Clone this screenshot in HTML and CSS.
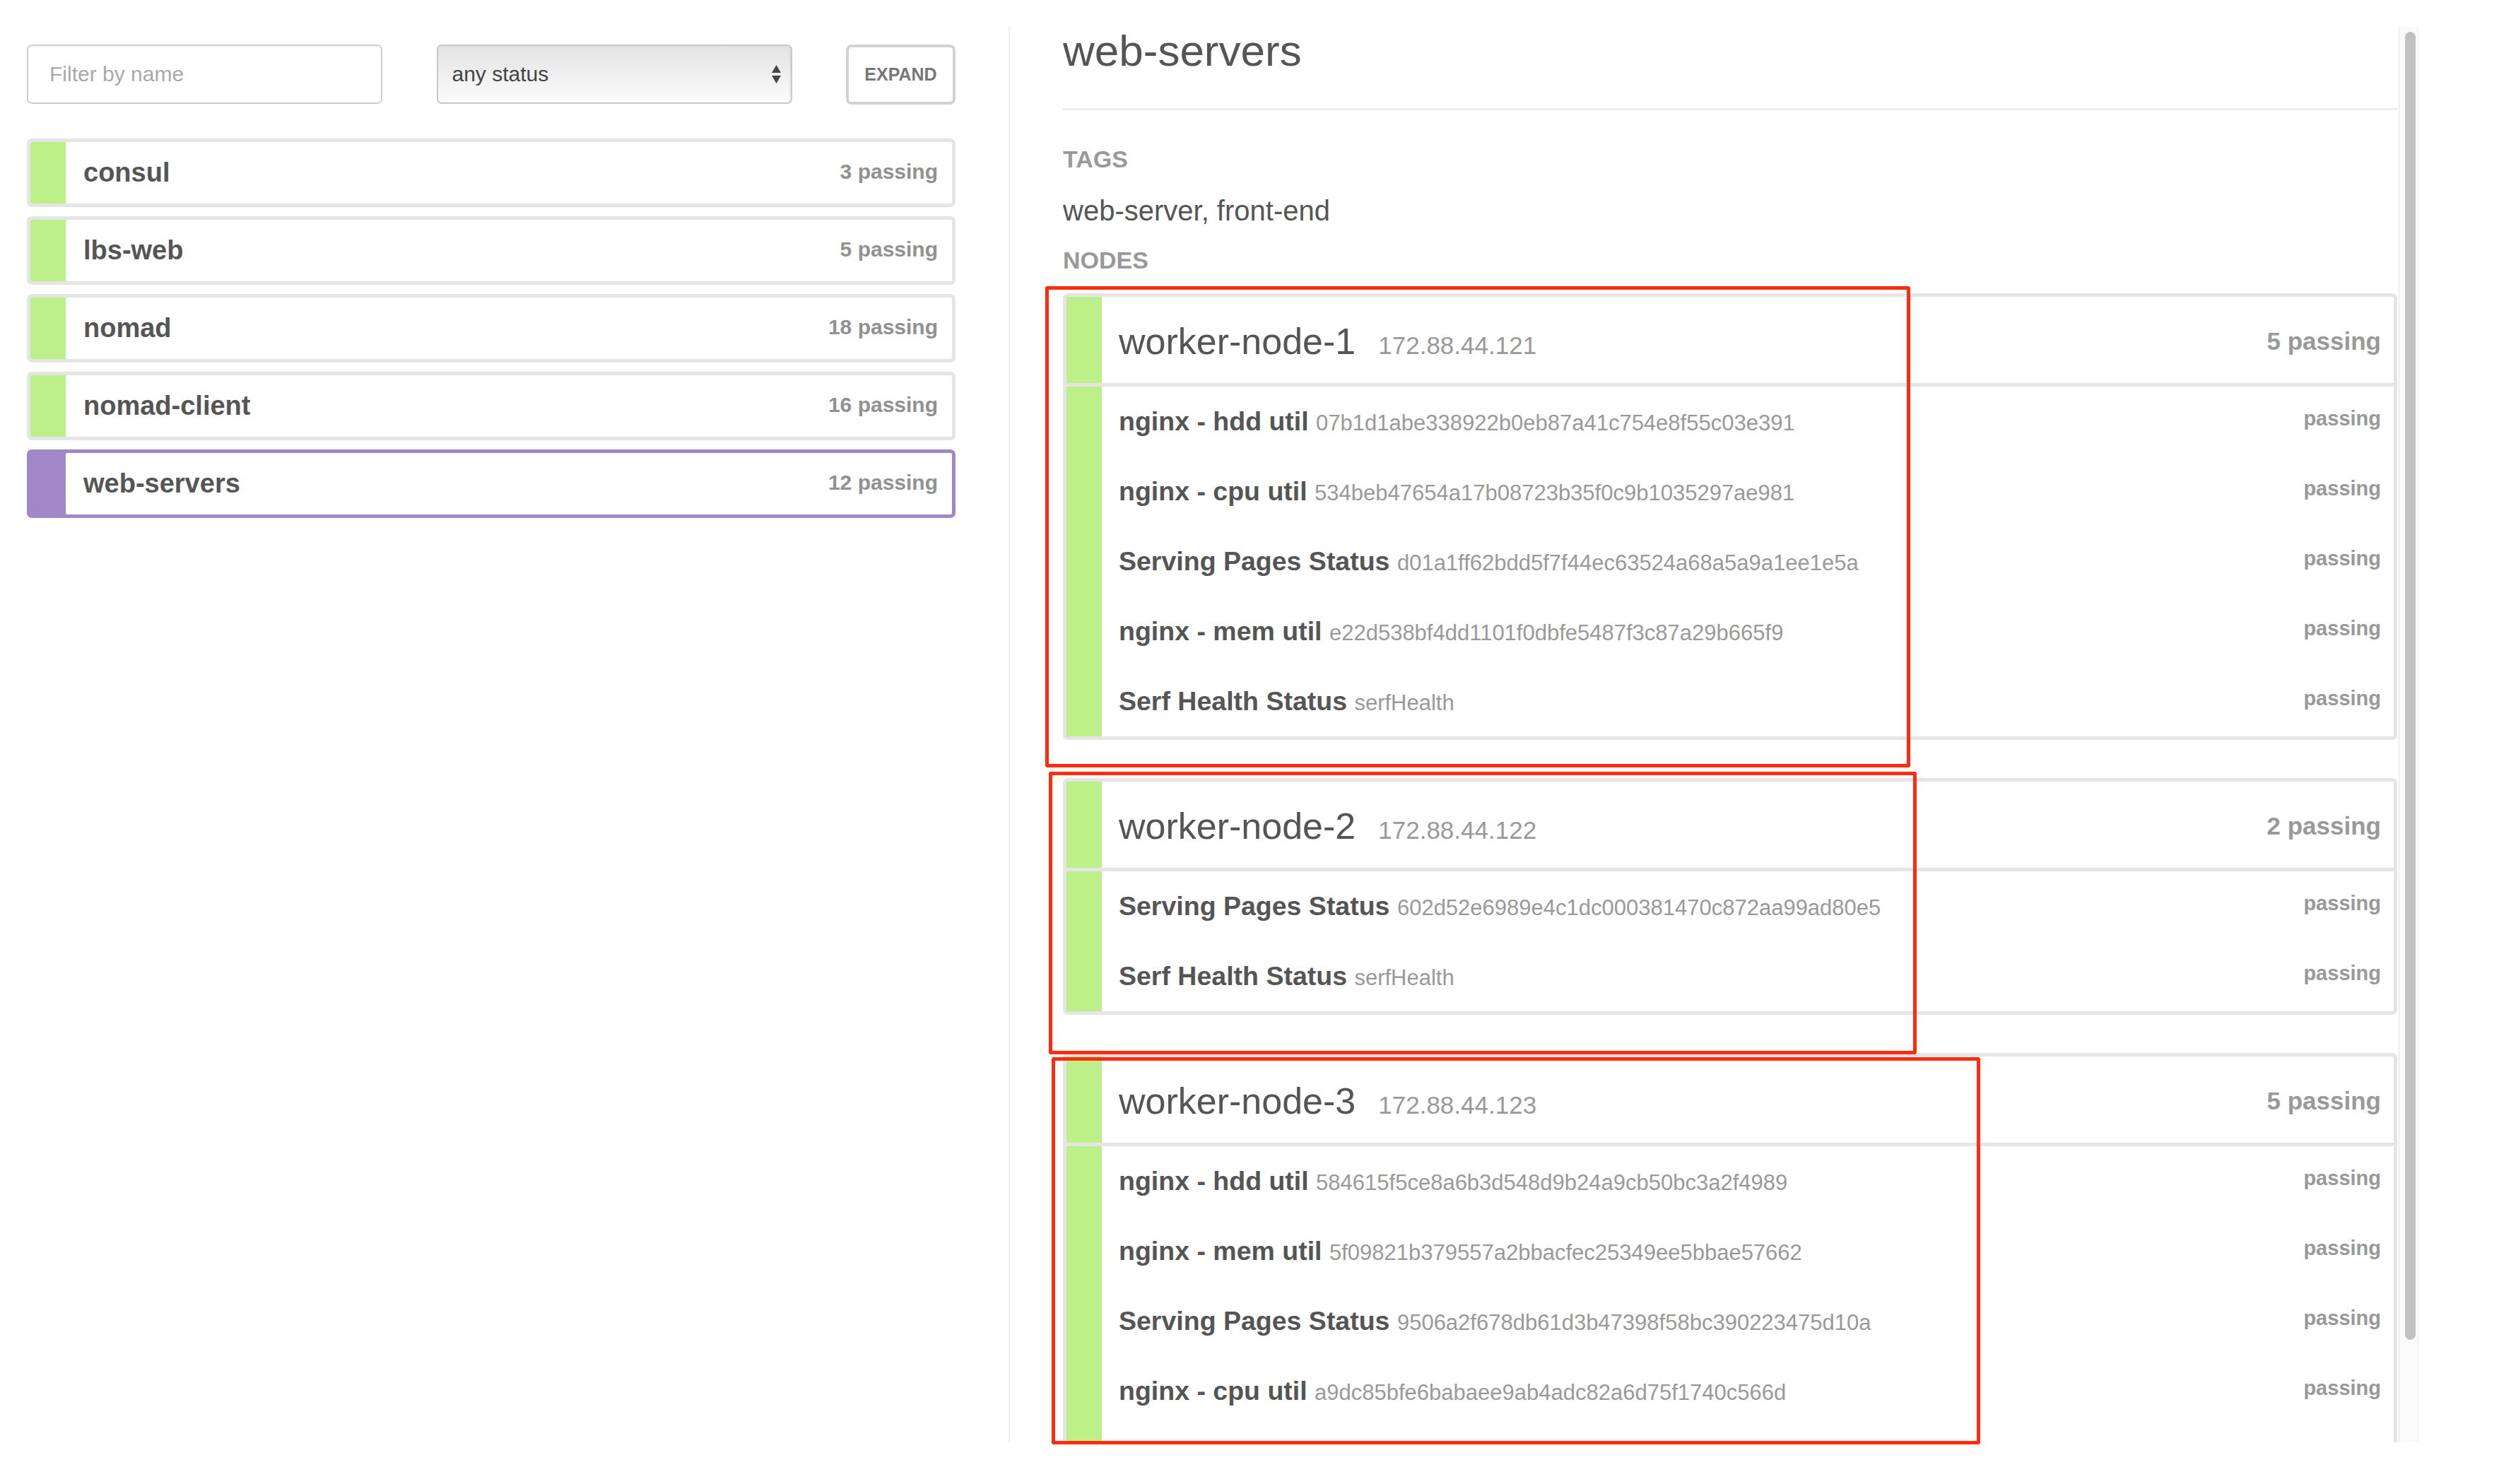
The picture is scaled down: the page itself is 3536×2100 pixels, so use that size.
FILE: index.html
```html
<!DOCTYPE html>
<html lang="en">
<head>
  <meta charset="UTF-8" />
  <meta name="viewport" content="width=device-width, initial-scale=1.0" />
  <title>Consul | Services</title>
  <link rel="stylesheet" href="styles.css">
</head>
<body>

<div class="app">
  <aside class="services">
    <div class="controls">
      <input class="filter" type="text" placeholder="Filter by name" />
      <div class="status-select">
        <span>any status</span>
        <svg width="13" height="26" viewBox="0 0 13 26">
          <polygon points="6.5,0 13,11 0,11" fill="#444" />
          <polygon points="0,15 13,15 6.5,26" fill="#444" />
        </svg>
      </div>
      <button class="expand">EXPAND</button>
    </div>

    <ul class="service-list">
      <li class="service"><span class="service-name">consul</span><span class="service-count">3 passing</span></li>
      <li class="service"><span class="service-name">lbs-web</span><span class="service-count">5 passing</span></li>
      <li class="service"><span class="service-name">nomad</span><span class="service-count">18 passing</span></li>
      <li class="service"><span class="service-name">nomad-client</span><span class="service-count">16 passing</span></li>
      <li class="service active"><span class="service-name">web-servers</span><span class="service-count">12 passing</span></li>
    </ul>
  </aside>

  <main class="detail">
    <div class="detail-body">
      <h2 class="title">web-servers</h2>
      <div class="rule"></div>

      <h4 class="label label-tags">TAGS</h4>
      <p class="tags">web-server, front-end</p>

      <h4 class="label label-nodes">NODES</h4>

      <div class="node">
        <div class="node-head">
          <div><span class="node-name">worker-node-1</span><span class="node-ip">172.88.44.121</span></div>
          <span class="node-count">5 passing</span>
        </div>
        <div class="checks">
          <div class="check"><span class="check-name">nginx - hdd util <span class="check-id">07b1d1abe338922b0eb87a41c754e8f55c03e391</span></span><span class="check-status">passing</span></div>
          <div class="check"><span class="check-name">nginx - cpu util <span class="check-id">534beb47654a17b08723b35f0c9b1035297ae981</span></span><span class="check-status">passing</span></div>
          <div class="check"><span class="check-name">Serving Pages Status <span class="check-id">d01a1ff62bdd5f7f44ec63524a68a5a9a1ee1e5a</span></span><span class="check-status">passing</span></div>
          <div class="check"><span class="check-name">nginx - mem util <span class="check-id">e22d538bf4dd1101f0dbfe5487f3c87a29b665f9</span></span><span class="check-status">passing</span></div>
          <div class="check"><span class="check-name">Serf Health Status <span class="check-id">serfHealth</span></span><span class="check-status">passing</span></div>
        </div>
      </div>

      <div class="node">
        <div class="node-head">
          <div><span class="node-name">worker-node-2</span><span class="node-ip">172.88.44.122</span></div>
          <span class="node-count">2 passing</span>
        </div>
        <div class="checks">
          <div class="check"><span class="check-name">Serving Pages Status <span class="check-id">602d52e6989e4c1dc000381470c872aa99ad80e5</span></span><span class="check-status">passing</span></div>
          <div class="check"><span class="check-name">Serf Health Status <span class="check-id">serfHealth</span></span><span class="check-status">passing</span></div>
        </div>
      </div>

      <div class="node">
        <div class="node-head">
          <div><span class="node-name">worker-node-3</span><span class="node-ip">172.88.44.123</span></div>
          <span class="node-count">5 passing</span>
        </div>
        <div class="checks">
          <div class="check"><span class="check-name">nginx - hdd util <span class="check-id">584615f5ce8a6b3d548d9b24a9cb50bc3a2f4989</span></span><span class="check-status">passing</span></div>
          <div class="check"><span class="check-name">nginx - mem util <span class="check-id">5f09821b379557a2bbacfec25349ee5bbae57662</span></span><span class="check-status">passing</span></div>
          <div class="check"><span class="check-name">Serving Pages Status <span class="check-id">9506a2f678db61d3b47398f58bc390223475d10a</span></span><span class="check-status">passing</span></div>
          <div class="check"><span class="check-name">nginx - cpu util <span class="check-id">a9dc85bfe6babaee9ab4adc82a6d75f1740c566d</span></span><span class="check-status">passing</span></div>
        </div>
      </div>
    </div>

    <div class="scrollbar"><div class="thumb"></div></div>
  </main>
</div>

<!-- red review marks -->
<div class="mark mark-1"></div>
<div class="mark mark-2"></div>
<div class="mark mark-3"></div>

</body>
</html>
```

FILE: styles.css
```css
body {
  margin: 0;
  height: 2100px;
  overflow: hidden;
  position: relative;
  background: #fff;
  font-family: 'Liberation Sans', Arial, sans-serif;
  color: #555;
}
.app {
  display: flex;
  height: 2100px;
}

/* Левая колонка */
.services {
  width: 1314px;
  margin-left: 38px;
  padding-top: 63px;
  flex-shrink: 0;
}
.controls {
  display: flex;
  justify-content: space-between;
  height: 84px;
}
.filter {
  box-sizing: border-box;
  width: 503px;
  height: 84px;
  margin: 0;
  padding: 0 0 0 30px;
  border: 2px solid #cfcfcf;
  border-radius: 7px;
  box-shadow: inset 0 2px 2px rgba(0, 0, 0, 0.04);
  font-family: 'Liberation Sans', Arial, sans-serif;
  font-size: 30px;
  color: #555;
  outline: none;
}
.filter::placeholder {
  color: #a9a9a9;
}
.status-select {
  box-sizing: border-box;
  width: 503px;
  height: 84px;
  display: flex;
  align-items: center;
  justify-content: space-between;
  padding: 0 14px 0 20px;
  border: 2px solid #c9c9c9;
  border-radius: 7px;
  background: linear-gradient(to bottom, #e3e3e3, #fcfcfc);
  box-shadow: inset -2px 0 2px rgba(0, 0, 0, 0.05);
  font-size: 30px;
  color: #444;
}
.status-select svg {
  display: block;
}
.expand {
  box-sizing: border-box;
  width: 155px;
  height: 85px;
  margin: 0;
  padding: 0;
  border: 4px solid #d2d2d2;
  border-radius: 8px;
  background: #fff;
  font-family: 'Liberation Sans', Arial, sans-serif;
  font-weight: bold;
  font-size: 25px;
  color: #777;
}
.service-list {
  list-style: none;
  margin: 49px 0 0;
  padding: 0;
}
.service {
  box-sizing: border-box;
  height: 97px;
  margin-bottom: 13px;
  display: flex;
  align-items: center;
  justify-content: space-between;
  padding: 0 20px 0 75px;
  border: 5px solid #e5e5e5;
  border-radius: 7px;
  box-shadow: inset 50px 0 0 #bdf088;
}
.service.active {
  border-color: #a087c6;
  box-shadow: inset 50px 0 0 #a087c6;
}
.service-name {
  font-weight: bold;
  font-size: 38px;
  color: #555;
}
.service-count {
  margin-bottom: 4px;
  font-weight: bold;
  font-size: 30px;
  color: #919191;
}

/* Правая колонка */
.detail {
  display: flex;
  height: 2003px;
  margin: 38px 0 0 75px;
  border-left: 2px solid #eee;
  flex-shrink: 0;
}
.detail-body {
  width: 1888px;
  padding: 0 2px 0 75px;
  overflow: hidden;
}
.title {
  margin: 0;
  font-weight: normal;
  font-size: 62px;
  line-height: 68px;
  color: #555;
}
.rule {
  height: 3px;
  margin-top: 47px;
  background: #eee;
}
.label {
  margin: 0;
  font-size: 34px;
  line-height: 40px;
  color: #999;
}
.label-tags {
  margin-top: 49px;
}
.label-nodes {
  margin-top: 27px;
}
.tags {
  margin: 30px 0 0;
  font-size: 40px;
  line-height: 46px;
  color: #555;
}
.label-nodes + .node {
  margin-top: 27px;
}
.node {
  border: 5px solid #e5e5e5;
  border-radius: 7px;
  margin-bottom: 54px;
}
.node-head {
  height: 119px;
  display: flex;
  align-items: center;
  justify-content: space-between;
  padding: 3px 18px 0 74px;
  border-bottom: 5px solid #e5e5e5;
  box-shadow: inset 50px 0 0 #bdf088;
}
.node-name {
  font-size: 52px;
  color: #555;
}
.node-ip {
  margin-left: 32px;
  font-size: 35px;
  color: #999;
}
.node-count {
  font-weight: bold;
  font-size: 35px;
  color: #999;
}
.checks {
  box-shadow: inset 50px 0 0 #bdf088;
}
/* у последнего узла есть ещё проверки ниже края панели */
.node:last-child .checks {
  padding-bottom: 80px;
}
.check {
  height: 99px;
  display: flex;
  align-items: center;
  justify-content: space-between;
  padding: 0 18px 0 74px;
}
.check-name {
  font-weight: bold;
  font-size: 37.5px;
  color: #555;
}
.check-id {
  font-weight: normal;
  font-size: 31px;
  color: #999;
}
.check-status {
  margin-bottom: 8px;
  font-weight: bold;
  font-size: 29px;
  color: #999;
}

/* Полоса прокрутки */
.scrollbar {
  box-sizing: border-box;
  width: 28px;
  padding: 7px 0 0 8px;
  background: #fafafa;
  border-left: 1px solid #e6e6e6;
  border-right: 1px solid #f0f0f0;
}
.thumb {
  width: 15px;
  height: 1851px;
  border-radius: 8px;
  background: #c1c1c1;
}

/* Красные рамки поверх */
.mark {
  position: absolute;
  box-sizing: border-box;
  border: 5px solid #fe2c0e;
  border-radius: 3px;
  pointer-events: none;
}
.mark-1 {
  left: 1479px;
  top: 405px;
  width: 1224px;
  height: 681px;
}
.mark-2 {
  left: 1484px;
  top: 1092px;
  width: 1228px;
  height: 400px;
}
.mark-3 {
  left: 1488px;
  top: 1496px;
  width: 1314px;
  height: 548px;
}
```
